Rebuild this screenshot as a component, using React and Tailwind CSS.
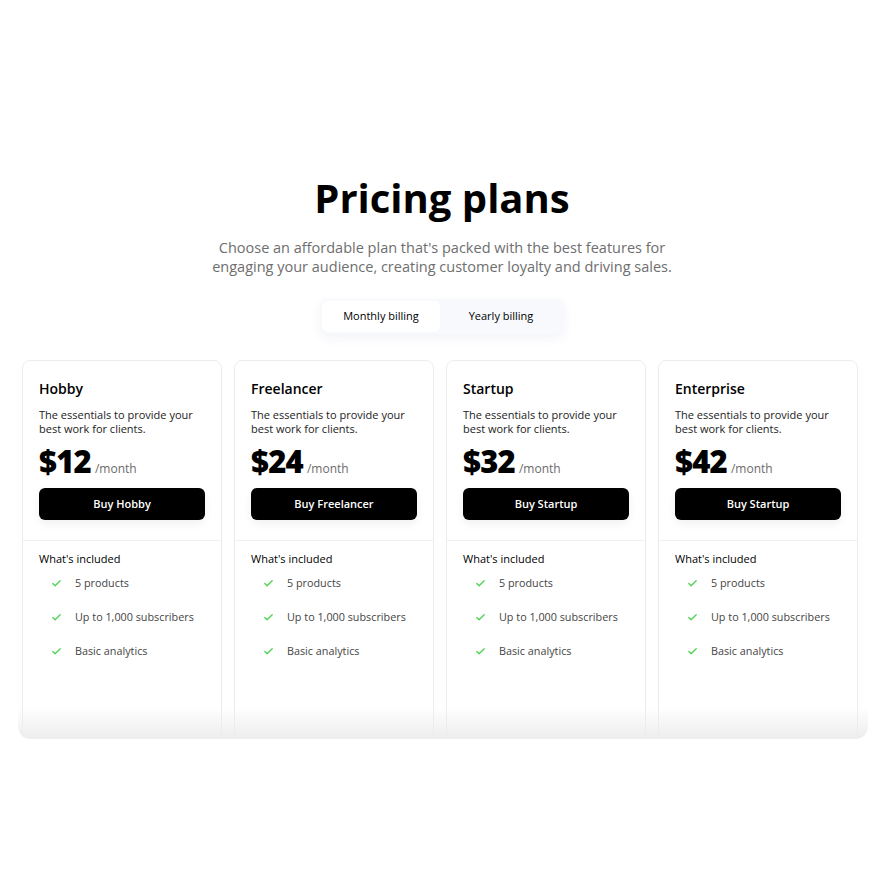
import { Check } from "lucide-react";

const PLANS = [
  { name: "Hobby", price: 12, cta: "Buy Hobby" },
  { name: "Freelancer", price: 24, cta: "Buy Freelancer" },
  { name: "Startup", price: 32, cta: "Buy Startup" },
  { name: "Enterprise", price: 42, cta: "Buy Startup" },
];

const FEATURES = ["5 products", "Up to 1,000 subscribers", "Basic analytics"];

function PlanCard({ plan }) {
  return (
    <div className="flex h-[420px] flex-col rounded-lg border border-[#ececec] bg-white">
      <div className="px-4 pt-[18px] pb-5">
        <h3 className="text-[14px] leading-5 font-semibold text-black">{plan.name}</h3>
        <p className="mt-[9px] text-[11px] leading-[14px] text-[#222]">
          The essentials to provide your best work for clients.
        </p>
        <div className="mt-[5px] flex items-baseline gap-1">
          <span className="text-[31px] leading-[40px] font-extrabold tracking-tight text-black">
            ${plan.price}
          </span>
          <span className="text-[12px] text-[#6b6b6b]">/month</span>
        </div>
        <button className="mt-[7px] h-8 w-full rounded-md bg-black text-[11px] font-semibold text-white shadow-[0_4px_10px_rgba(0,0,0,0.06)]">
          {plan.cta}
        </button>
      </div>
      <div className="border-t border-[#f0f0f0] px-4 pt-[10px]">
        <p className="text-[11px] leading-4 font-medium text-black">What's included</p>
        <ul className="mt-[9px] flex flex-col gap-[20px] pl-3">
          {FEATURES.map((f) => (
            <li key={f} className="flex items-center gap-[13px] text-[10.8px] leading-[14px] text-[#444]">
              <Check size={11} strokeWidth={3.2} className="text-[#55d35a]" />
              {f}
            </li>
          ))}
        </ul>
      </div>
    </div>
  );
}

export default function App() {
  return (
    <div
      className="flex min-h-[884px] w-[884px] flex-col items-center bg-white pt-[172px]"
      style={{ fontFamily: '"Open Sans", "Noto Sans", sans-serif' }}
    >
      <h1 className="text-[40px] leading-[52px] font-bold text-black">Pricing plans</h1>
      <p className="mt-[14px] text-center text-[14.5px] leading-[19px] text-[#6e6e6e]">
        Choose an affordable plan that's packed with the best features for
        <br />
        engaging your audience, creating customer loyalty and driving sales.
      </p>
      <div className="mt-[23px] flex rounded-lg bg-[#f8f9fd] p-[2px] shadow-[0_4px_12px_rgba(40,50,120,0.06)]">
        <button className="h-[31px] w-[118px] rounded-md bg-white text-[11px] font-medium text-black">
          Monthly billing
        </button>
        <button className="h-[31px] w-[122px] rounded-md text-[11px] font-medium text-black">
          Yearly billing
        </button>
      </div>
      <div className="relative mt-[22px] ml-[2px] h-[383px] w-[850px] overflow-hidden rounded-b-xl pt-1 pl-1">
        <div className="grid w-[836px] grid-cols-4 gap-3">
          {PLANS.map((p) => (
            <PlanCard key={p.name} plan={p} />
          ))}
        </div>
        <div className="pointer-events-none absolute inset-x-0 bottom-0 h-[32px] rounded-b-xl bg-gradient-to-b from-white/0 to-[#ededed]" />
      </div>
    </div>
  );
}
